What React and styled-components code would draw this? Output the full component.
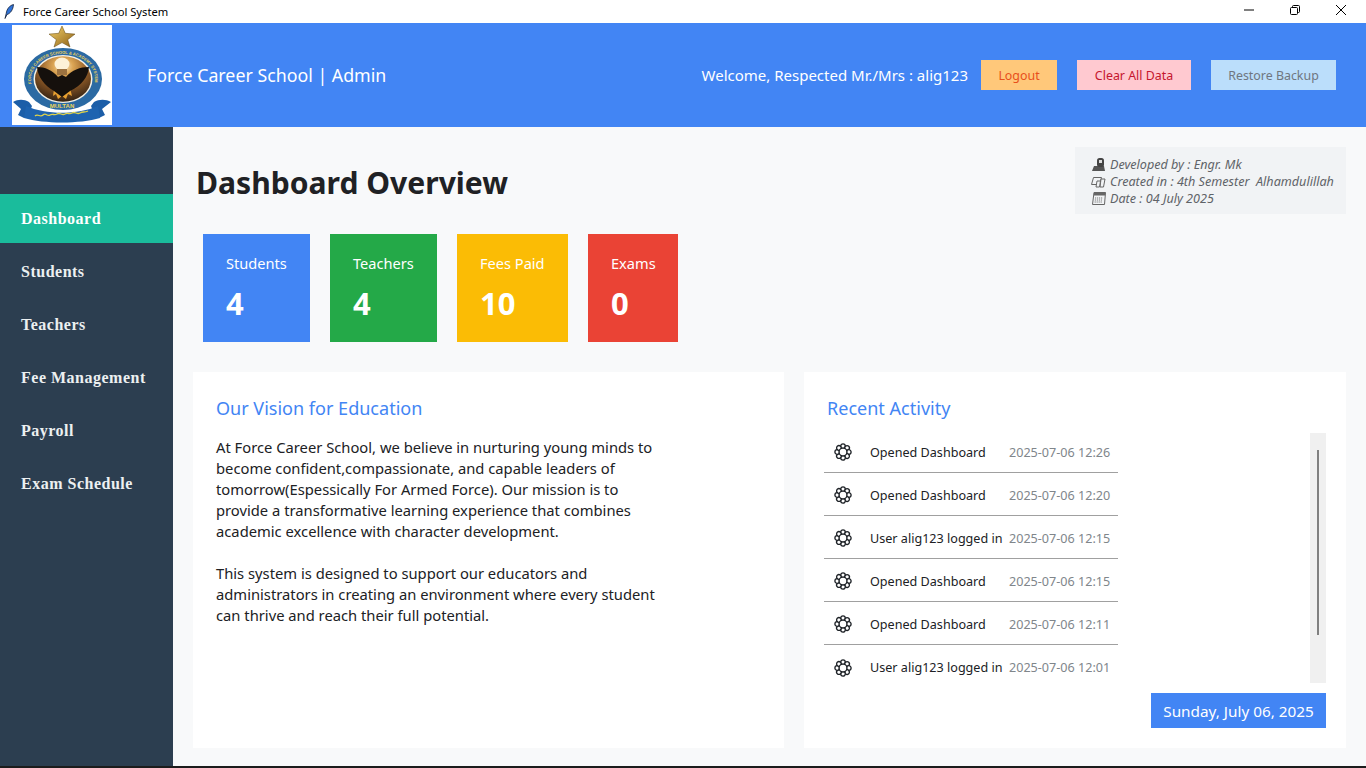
import React from "react";
import styled, { createGlobalStyle } from "styled-components";

const Global = createGlobalStyle`
  html, body { margin: 0; padding: 0; height: 100%; overflow: hidden; }
  body { font-family: "Noto Sans", "Open Sans", sans-serif; background: #1c1c1c; }
  * { box-sizing: border-box; }
`;

const Shell = styled.div`
  width: 1366px; height: 766px; display: flex; flex-direction: column; background: #f8f9fa;
`;
const TitleBar = styled.div`
  height: 23px; flex: none; background: #fff; display: flex; align-items: center; padding: 0 2px 0 4px;
`;
const TitleText = styled.span`
  font-size: 11.2px; color: #000; margin-left: 9px; flex: 1;
`;
const WinButton = styled.button`
  width: 46px; height: 23px; border: 0; background: transparent; padding: 0 0 3px; display: flex; align-items: center; justify-content: center;
`;
const Header = styled.header`
  height: 104px; flex: none; background: #4285f4; display: flex; align-items: center; padding: 0 30px 0 12px;
`;
const LogoBox = styled.div`
  width: 100px; height: 100px; background: #fff; flex: none;
  svg { display: block; }
`;
const Brand = styled.div`
  font-size: 17.8px; color: #fff; margin-left: 35px; flex: 1;
`;
const Welcome = styled.span`
  font-size: 15px; color: #fff; margin-right: 13px;
`;
const HeaderBtn = styled.button`
  height: 30px; width: ${p => p.$w}px; margin-left: ${p => p.$ml}px; border: 0; padding: 0;
  background: ${p => p.$bg}; color: ${p => p.$fg}; font: 12.4px "Noto Sans", sans-serif;
`;
const Body = styled.div`
  flex: 1; display: flex; min-height: 0;
`;
const Sidebar = styled.nav`
  width: 173px; flex: none; background: #2c3e50; padding-top: 67px; display: flex; flex-direction: column; gap: 4px;
`;
const NavItem = styled.div`
  height: 49px; display: flex; align-items: center; padding-left: 21px;
  font: bold 16px "Liberation Serif", serif; letter-spacing: 0.5px;
  color: ${p => (p.$active ? "#ffffff" : "#ecf0f1")};
  background: ${p => (p.$active ? "#1abc9c" : "transparent")};
`;
const Main = styled.main`
  flex: 1; padding: 20px 20px 18px 20px; display: flex; flex-direction: column; min-width: 0;
`;
const TopRow = styled.div`
  display: flex; justify-content: space-between; height: 67px;
`;
const Heading = styled.h1`
  margin: 13px 0 0 3px; font-size: 30.1px; line-height: 46px; font-weight: 700; color: #202124;
`;
const Credits = styled.div`
  width: 271px; height: 67px; background: #f1f3f5; padding: 9px 0 0 16px; display: flex; flex-direction: column;
`;
const CreditLine = styled.div`
  display: flex; align-items: center; height: 17px; font-size: 12.6px; font-style: italic; color: #5f6368; white-space: pre;
  svg { margin-right: 3px; flex: none; }
`;
const Stats = styled.div`
  display: flex; gap: 20px; margin: 20px 0 0 10px;
`;
const Stat = styled.div`
  width: ${p => p.$w}px; height: 108px; background: ${p => p.$bg}; color: #fff; padding: 19px 0 0 ${p => p.$pl}px;
`;
const StatLabel = styled.div`
  font-size: 14.6px; line-height: 21px;
`;
const StatValue = styled.div`
  font-size: 31px; font-weight: 700; line-height: 42px; margin-top: 8px;
`;
const Panels = styled.div`
  display: flex; gap: 20px; margin-top: 30px; flex: 1; min-height: 0;
`;
const Panel = styled.section`
  background: #fff; width: ${p => p.$w}px; flex: none; position: relative; padding: 24px 23px 0;
`;
const PanelTitle = styled.h2`
  margin: 0; font-size: 18.05px; font-weight: 400; line-height: 25px; color: #4285f4;
`;
const Para = styled.p`
  margin: ${p => p.$mt}px 0 0; font-size: 14.75px; line-height: 21px; color: #202124; width: 450px; white-space: pre;
`;
const ActivityWrap = styled.div`
  display: flex; margin-top: 9px; margin-left: -3px; justify-content: space-between; align-items: flex-start;
`;
const ActivityList = styled.div`
  width: 294px; display: flex; flex-direction: column;
`;
const ActivityRow = styled.div`
  height: 43px; display: flex; align-items: center; padding: 2px 0 0 10px;
  border-bottom: ${p => (p.$last ? "0" : "1px solid #a0a0a0")};
`;
const ActivityText = styled.span`
  font-size: 12.6px; color: #202124; margin-left: 18px; width: 139px; flex: none; white-space: nowrap;
`;
const ActivityTime = styled.span`
  font-size: 12.6px; color: #80868b; white-space: nowrap;
`;
const Track = styled.div`
  width: 16px; height: 250px; margin: 3px -3px 0 0; background: #f0f0f0; padding: 17px 0 0 7px;
`;
const Thumb = styled.div`
  width: 2px; height: 185px; background: #808080;
`;
const DateBadge = styled.div`
  position: absolute; right: 20px; bottom: 20px; width: 175px; height: 35px; background: #4285f4; color: #fff;
  font-size: 15.3px; display: flex; align-items: center; justify-content: center;
`;

const Gear = () => (
  <svg width="18" height="18" viewBox="0 0 18 18" fill="#fff" stroke="#1f2328" strokeWidth="1.300">
    {[0, 45, 90, 135, 180, 225, 270, 315].map(a => (
      <circle key={a} cx="9" cy="3.200" r="2.300" transform={`rotate(${a} 9 9)`} />
    ))}
    <circle cx="9" cy="9" r="3.900" />
  </svg>
);

const Logo = () => (
  <svg width="100" height="100" viewBox="0 0 100 100">
    <defs>
      <radialGradient id="sky" cx="50%" cy="22%" r="80%">
        <stop offset="0" stopColor="#fbeccb" />
        <stop offset="0.22" stopColor="#dca655" />
        <stop offset="0.55" stopColor="#8f5a26" />
        <stop offset="1" stopColor="#2e1f12" />
      </radialGradient>
      <linearGradient id="gold" x1="0" y1="0" x2="1" y2="1">
        <stop offset="0" stopColor="#f5d36b" />
        <stop offset="1" stopColor="#8a5d14" />
      </linearGradient>
      <path id="ringArc" d="M20 60.600 A 32 25.500 0 1 1 82 60.600" />
    </defs>
    <path d="M50 1l3.300 7.300 9.700.8-7.300 5.600 2.300 7.300-8-4.400-8 4.400 2.300-7.300-7.300-5.600 9.700-.8z" fill="url(#gold)" stroke="#5f4510" strokeWidth=".5" />
    <ellipse cx="51" cy="54" rx="39" ry="31" fill="#2b6aa3" />
    <ellipse cx="51" cy="54" rx="29.500" ry="24" fill="#f4f1e6" />
    <ellipse cx="51" cy="54" rx="28" ry="22.700" fill="url(#sky)" />
    <ellipse cx="50" cy="39" rx="7.500" ry="6.500" fill="#fdf2d8" />
    <rect x="45" y="44" width="10" height="6" fill="#9c7240" />
    <path d="M42 64l-1 7 3-2 2 5 4-3 4 3 2-5 4 2-2-8z" fill="#e8a030" />
    <path d="M25 42c8 0 15 3 21 10l4-2 4 2c6-7 14-10 23-10-1 10-7 18-19 24l-8 6-8-6c-10-6-16-14-17-24z" fill="#15100c" />
    <text fill="#ecd35a" fontFamily="'Liberation Sans', sans-serif" fontWeight="700" fontSize="4.100">
      <textPath href="#ringArc" startOffset="2">FORCES CAREER SCHOOL &amp; ACADEMY SYSTEM</textPath>
    </text>
    <path d="M1 77c5-3 11-3 16 0l3 4-4 10-4 2-6-3 3-6z" fill="#1c5ea8" />
    <path d="M99 77c-5-3-12-3-17 0l-3 4 4 10 4 2 6-3-3-6z" fill="#1c5ea8" />
    <path d="M14 81c20 9 52 9 72 0l2 12c-20 6-56 6-76 0z" fill="#1e63b0" />
    <text x="50" y="83" textAnchor="middle" fill="#ecd35a" fontFamily="'Liberation Sans', sans-serif" fontWeight="700" fontSize="6">MULTAN</text>
    <path d="M23 91c3-3 5 2 8-1s4 2 7 0 4 1 7-1 5 2 8 0 4 1 7-1 5 2 8 0 4 0 8-2" fill="none" stroke="#dfd24a" strokeWidth="1.300" />
  </svg>
);

const Feather = () => (
  <svg width="10" height="15" viewBox="0 0 10 15">
    <path d="M9.500.5C5.500 1.500 2.800 5 2.200 9.500L1 14.500l2-4c3.500-1 6.200-5 6.500-10z" fill="#2f72d6" stroke="#14213a" strokeWidth=".8" />
  </svg>
);

const Lock = () => (
  <svg width="16" height="15" viewBox="0 0 16 15">
    <path d="M1 14l2-5h10l1 5z" fill="#555" />
    <rect x="6" y="1" width="7" height="9" rx="2.500" fill="#444" />
    <rect x="8" y="3" width="3" height="3" fill="#ddd" />
  </svg>
);
const Docs = () => (
  <svg width="16" height="15" viewBox="0 0 16 15" fill="#f1f3f5" stroke="#666" strokeWidth="1">
    <path d="M2.500 3.500h8l-2 7h-8z" />
    <path d="M10 5h4l-1.500 8H9z" />
    <path d="M6 7h3.500l-1 6H5z" />
  </svg>
);
const Cal = () => (
  <svg width="16" height="15" viewBox="0 0 16 15">
    <path d="M3 1.500h11.500l-1 12H1.500z" fill="#f1f3f5" stroke="#666" />
    <path d="M3 1.500h11.500l-.3 3H2.700z" fill="#666" />
    <path d="M4 7h8M3.800 9h8M3.600 11h8" stroke="#777" strokeDasharray="1.200 .8" />
  </svg>
);

const stats = [
  { label: "Students", value: "4", bg: "#4285f4", w: 107, pl: 23 },
  { label: "Teachers", value: "4", bg: "#24a948", w: 107, pl: 23 },
  { label: "Fees Paid", value: "10", bg: "#fbbc05", w: 111, pl: 23 },
  { label: "Exams", value: "0", bg: "#ea4335", w: 90, pl: 23 },
];
const nav = ["Dashboard", "Students", "Teachers", "Fee Management", "Payroll", "Exam Schedule"];
const activity = [
  ["Opened Dashboard", "2025-07-06 12:26"],
  ["Opened Dashboard", "2025-07-06 12:20"],
  ["User alig123 logged in", "2025-07-06 12:15"],
  ["Opened Dashboard", "2025-07-06 12:15"],
  ["Opened Dashboard", "2025-07-06 12:11"],
  ["User alig123 logged in", "2025-07-06 12:01"],
];

export default function App() {
  return (
    <Shell>
      <Global />
      <TitleBar>
        <Feather />
        <TitleText>Force Career School System</TitleText>
        <WinButton aria-label="Minimize">
          <svg width="10" height="10" viewBox="0 0 10 10"><path d="M0 5h10" stroke="#000" /></svg>
        </WinButton>
        <WinButton aria-label="Restore">
          <svg width="10" height="10" viewBox="0 0 10 10" fill="none" stroke="#000"><rect x=".5" y="2.500" width="7" height="7" rx="1" /><path d="M2.500 2.500V1.500a1 1 0 0 1 1-1h5a1 1 0 0 1 1 1v5a1 1 0 0 1-1 1h-1" /></svg>
        </WinButton>
        <WinButton aria-label="Close">
          <svg width="10" height="10" viewBox="0 0 10 10"><path d="M0 0l10 10M10 0L0 10" stroke="#000" /></svg>
        </WinButton>
      </TitleBar>
      <Header>
        <LogoBox><Logo /></LogoBox>
        <Brand>Force Career School | Admin</Brand>
        <Welcome>Welcome, Respected Mr./Mrs : alig123</Welcome>
        <HeaderBtn $w={76} $ml={0} $bg="#ffc87a" $fg="#e8501a">Logout</HeaderBtn>
        <HeaderBtn $w={114} $ml={20} $bg="#ffc9d0" $fg="#c5162e">Clear All Data</HeaderBtn>
        <HeaderBtn $w={125} $ml={20} $bg="#bbdefb" $fg="#6f7680">Restore Backup</HeaderBtn>
      </Header>
      <Body>
        <Sidebar>
          {nav.map((n, i) => <NavItem key={n} $active={i === 0}>{n}</NavItem>)}
        </Sidebar>
        <Main>
          <TopRow>
            <Heading>Dashboard Overview</Heading>
            <Credits>
              <CreditLine><Lock />Developed by : Engr. Mk</CreditLine>
              <CreditLine><Docs />Created in : 4th Semester  Alhamdulillah</CreditLine>
              <CreditLine><Cal />Date : 04 July 2025</CreditLine>
            </Credits>
          </TopRow>
          <Stats>
            {stats.map(s => (
              <Stat key={s.label} $w={s.w} $bg={s.bg} $pl={s.pl}>
                <StatLabel>{s.label}</StatLabel>
                <StatValue>{s.value}</StatValue>
              </Stat>
            ))}
          </Stats>
          <Panels>
            <Panel $w={591}>
              <PanelTitle>Our Vision for Education</PanelTitle>
              <Para $mt={16}>{"At Force Career School, we believe in nurturing young minds to\nbecome confident,compassionate, and capable leaders of\ntomorrow(Espessically For Armed Force). Our mission is to\nprovide a transformative learning experience that combines\nacademic excellence with character development."}</Para>
              <Para $mt={21}>{"This system is designed to support our educators and\nadministrators in creating an environment where every student\ncan thrive and reach their full potential."}</Para>
            </Panel>
            <Panel $w={542}>
              <PanelTitle>Recent Activity</PanelTitle>
              <ActivityWrap>
                <ActivityList>
                  {activity.map(([t, d], i) => (
                    <ActivityRow key={d + i} $last={i === activity.length - 1}>
                      <Gear />
                      <ActivityText>{t}</ActivityText>
                      <ActivityTime>{d}</ActivityTime>
                    </ActivityRow>
                  ))}
                </ActivityList>
                <Track><Thumb /></Track>
              </ActivityWrap>
              <DateBadge>Sunday, July 06, 2025</DateBadge>
            </Panel>
          </Panels>
        </Main>
      </Body>
    </Shell>
  );
}
